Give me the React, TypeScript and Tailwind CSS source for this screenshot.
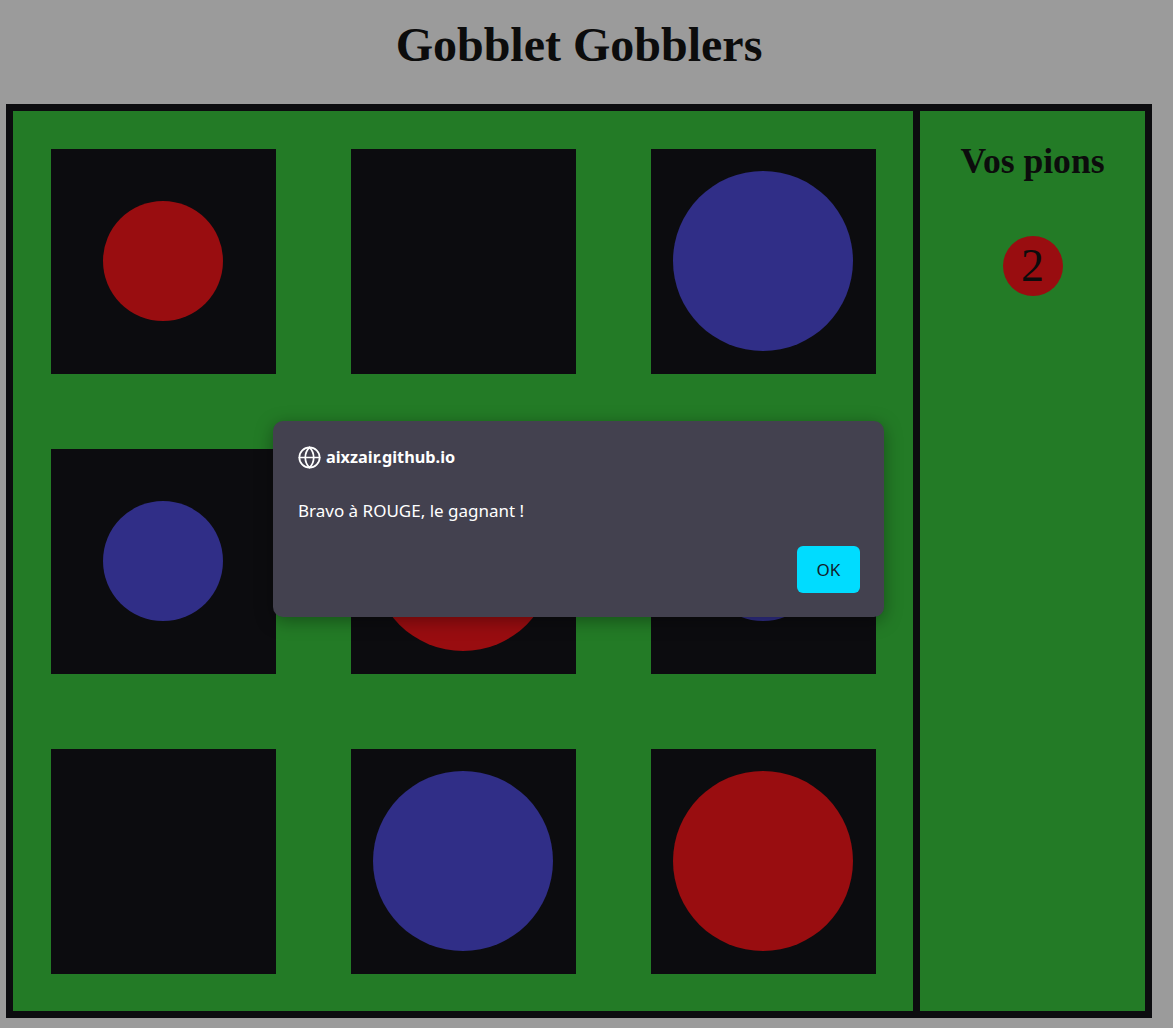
type Piece = { color: "red" | "blue"; size: "small" | "large" } | null;

const board: Piece[] = [
  { color: "red", size: "small" },
  null,
  { color: "blue", size: "large" },
  { color: "blue", size: "small" },
  { color: "red", size: "large" },
  { color: "blue", size: "small" },
  null,
  { color: "blue", size: "large" },
  { color: "red", size: "large" },
];

const Cell = ({ piece }: { piece: Piece }) => {
  return (
    <div className="flex items-center justify-center">
      <div className="w-[225px] h-[225px] bg-[#0c0c0f] flex items-center justify-center">
        {piece && (
          <div
            className={[
              "rounded-full",
              piece.color === "red" ? "bg-[#990d10]" : "bg-[#302e87]",
              piece.size === "small" ? "w-[120px] h-[120px]" : "w-[180px] h-[180px]",
            ].join(" ")}
          />
        )}
      </div>
    </div>
  );
};

const GlobeIcon = () => (
  <svg
    width="23"
    height="23"
    viewBox="0 0 24 24"
    fill="none"
    stroke="white"
    strokeWidth="1.8"
    strokeLinecap="round"
    strokeLinejoin="round"
  >
    <circle cx="12" cy="12" r="10.6" />
    <path d="M12 1.4a15 15 0 0 0 0 21.2 15 15 0 0 0 0-21.2" />
    <path d="M1.4 12h21.2" />
  </svg>
);

export default function App() {
  return (
    <div className="relative min-h-[1028px] bg-[#9b9b9b] font-['Liberation_Serif',serif]">
      <div className="ml-[6px] w-[1146px]">
        <h1 className="pt-[17px] text-center text-[48px] leading-[55px] font-bold text-[#0c0c0c]">
          Gobblet Gobblers
        </h1>

        <div className="mt-[32px] flex border-[7px] border-[#0c0c0f]">
          <div className="grid grid-cols-3 grid-rows-3 w-[900px] h-[900px] bg-[#237b26]">
            {board.map((piece, idx) => (
              <Cell key={idx} piece={piece} />
            ))}
          </div>

          <div className="w-[232px] border-l-[7px] border-[#0c0c0f] bg-[#237b26] flex flex-col items-center pt-[30px]">
            <h2 className="text-[35.6px] leading-[40px] font-bold text-[#0c0c0c]">
              Vos pions
            </h2>
            <div className="mt-[55px] w-[60px] h-[60px] rounded-full bg-[#990d10] flex items-center justify-center">
              <span className="text-[46px] leading-[46px] text-[#0c0c0c]">2</span>
            </div>
          </div>
        </div>
      </div>

      {/* alert dialog */}
      <div className="absolute left-[273px] top-[421px] w-[611px] h-[196px] rounded-[10px] bg-[#43414f] shadow-[0_4px_18px_rgba(0,0,0,0.35)] pl-[25px] pr-[24px] pt-[24px] pb-[24px] font-['Noto_Sans',sans-serif] text-white flex flex-col">
        <div className="flex items-center gap-[5px] h-[24px]">
          <GlobeIcon />
          <span className="text-[16.3px] font-bold leading-[24px]">aixzair.github.io</span>
        </div>
        <p className="mt-[30px] text-[17px] leading-[23px]">Bravo à ROUGE, le gagnant !</p>
        <div className="mt-auto flex justify-end">
          <button className="w-[63px] h-[47px] rounded-[6px] bg-[#00dcff] text-[#13202b] text-[17px]">
            OK
          </button>
        </div>
      </div>
    </div>
  );
}
